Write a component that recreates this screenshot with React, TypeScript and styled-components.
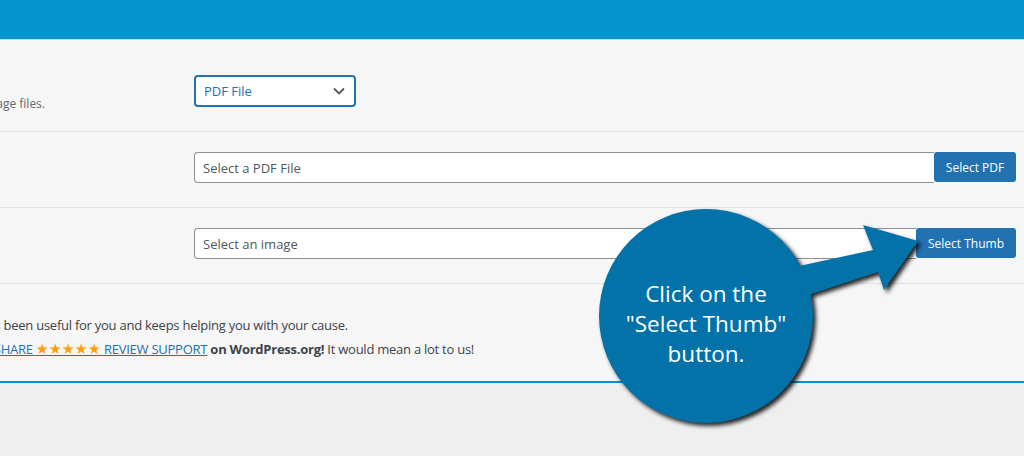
import React from "react";
import styled, { createGlobalStyle } from "styled-components";

const GlobalStyle = createGlobalStyle`
  html, body { margin: 0; padding: 0; }
  body {
    background: #efefef;
    font-family: "Open Sans", "Noto Sans", sans-serif;
    color: #3c434a;
    overflow: hidden;
  }
`;

const Page = styled.div`
  position: relative;
  width: 1024px;
  height: 456px;
  overflow: hidden;
  background: #efefef;
`;

const TopBar = styled.div`
  height: 39px;
  background: #0595cf;
  border-bottom: 1px solid #dadada;
`;

const Panel = styled.div`
  margin-left: -300px;
  width: 1324px;
  background: #f6f6f6;
  border-bottom: 2px solid #0a90cc;
`;

const Row = styled.div<{ $top: number; $h: number }>`
  box-sizing: border-box;
  height: ${(p) => p.$h}px;
  display: grid;
  grid-template-columns: 494px 1fr;
  padding: ${(p) => p.$top}px 8px 0 0;
  border-bottom: 1px solid #e1e1e1;
  align-items: start;
`;

const LabelCell = styled.div`
  display: flex;
  flex-direction: column;
  align-items: flex-end;
  padding-right: 149px;
`;

const Desc = styled.p`
  margin: 20px 0 0;
  font-size: 12px;
  line-height: 18px;
  color: #646970;
  white-space: nowrap;
`;

const Field = styled.div`
  display: flex;
  align-items: stretch;
`;

const Select = styled.div`
  box-sizing: border-box;
  width: 162px;
  height: 32px;
  border: 2px solid #2271b1;
  border-radius: 4px;
  background: #fff;
  display: flex;
  align-items: center;
  justify-content: space-between;
  padding: 0 9px 0 8px;
  font-size: 13px;
  color: #2271b1;
`;

const TextInput = styled.div`
  box-sizing: border-box;
  flex: 1;
  height: 31px;
  border: 1px solid #8c8f94;
  border-right: none;
  border-radius: 4px 0 0 4px;
  background: #fff;
  display: flex;
  align-items: center;
  padding-left: 8px;
  font-size: 13px;
  color: #50575e;
`;

const Button = styled.div<{ $w: number }>`
  box-sizing: border-box;
  width: ${(p) => p.$w}px;
  height: 30px;
  background: #2271b1;
  border-radius: 3px;
  color: #fff;
  font-size: 12px;
  display: flex;
  align-items: center;
  justify-content: center;
`;

const Notice = styled.div`
  box-sizing: border-box;
  height: 97px;
  padding: 29px 0 0 253px;
  font-size: 13px;
  letter-spacing: -0.25px;
  line-height: 24px;
  color: #3c434a;
  white-space: nowrap;
`;

const Line = styled.p`
  margin: 0;
`;

const Link = styled.a`
  color: #2271b1;
  text-decoration: underline;
`;

const Stars = styled.span`
  color: #ffa000;
  font-family: "DejaVu Sans", sans-serif;
  font-size: 14.5px;
  line-height: 0;
  letter-spacing: 0;
`;

const Bold = styled.strong`
  font-weight: 700;
`;

const Callout = styled.div`
  position: absolute;
  left: 590px;
  top: 200px;
  width: 340px;
  height: 240px;
`;

const CalloutSvg = styled.svg`
  position: absolute;
  left: 0;
  top: 0;
  overflow: visible;
  filter: drop-shadow(3px 3px 2px rgba(0, 0, 0, 0.85));
`;

const CalloutText = styled.div`
  position: absolute;
  left: 9px;
  top: 79px;
  width: 214px;
  text-align: center;
  color: #fff;
  font-family: "Open Sans", sans-serif;
  font-size: 22.5px;
  line-height: 30px;
`;

const Chevron = () => (
  <svg width="12" height="8" viewBox="0 0 12 8">
    <path d="M1 1.5 L6 6.5 L11 1.5" fill="none" stroke="#50575e" strokeWidth="1.8" />
  </svg>
);

export default function App() {
  return (
    <Page>
      <GlobalStyle />
      <TopBar />
      <Panel>
        <Row $top={35} $h={92}>
          <LabelCell>
            <Desc>Choose to use PDF files or image files.</Desc>
          </LabelCell>
          <Field>
            <Select>
              <span>PDF File</span>
              <Chevron />
            </Select>
          </Field>
        </Row>
        <Row $top={20} $h={76}>
          <LabelCell />
          <Field>
            <TextInput>Select a PDF File</TextInput>
            <Button $w={82}>Select PDF</Button>
          </Field>
        </Row>
        <Row $top={20} $h={76}>
          <LabelCell />
          <Field>
            <TextInput>Select an image</TextInput>
            <Button $w={100}>Select Thumb</Button>
          </Field>
        </Row>
        <Notice>
          <Line>This has been useful for you and keeps helping you with your cause.</Line>
          <Line>
            Please <Link href="#">SHARE <Stars>★★★★★</Stars> REVIEW SUPPORT</Link> <Bold>on WordPress.org!</Bold> It would mean a lot to us!
          </Line>
        </Notice>
      </Panel>
      <Callout>
        <CalloutSvg width="340" height="240" viewBox="0 0 340 240">
          <g fill="#0272a9">
            <circle cx="116" cy="116" r="107" />
            <polygon points="200,68 283,50 273,25 328,41 294,90 288,72 215,96" />
          </g>
        </CalloutSvg>
        <CalloutText>
          Click on the
          <br />
          "Select Thumb"
          <br />
          button.
        </CalloutText>
      </Callout>
    </Page>
  );
}
